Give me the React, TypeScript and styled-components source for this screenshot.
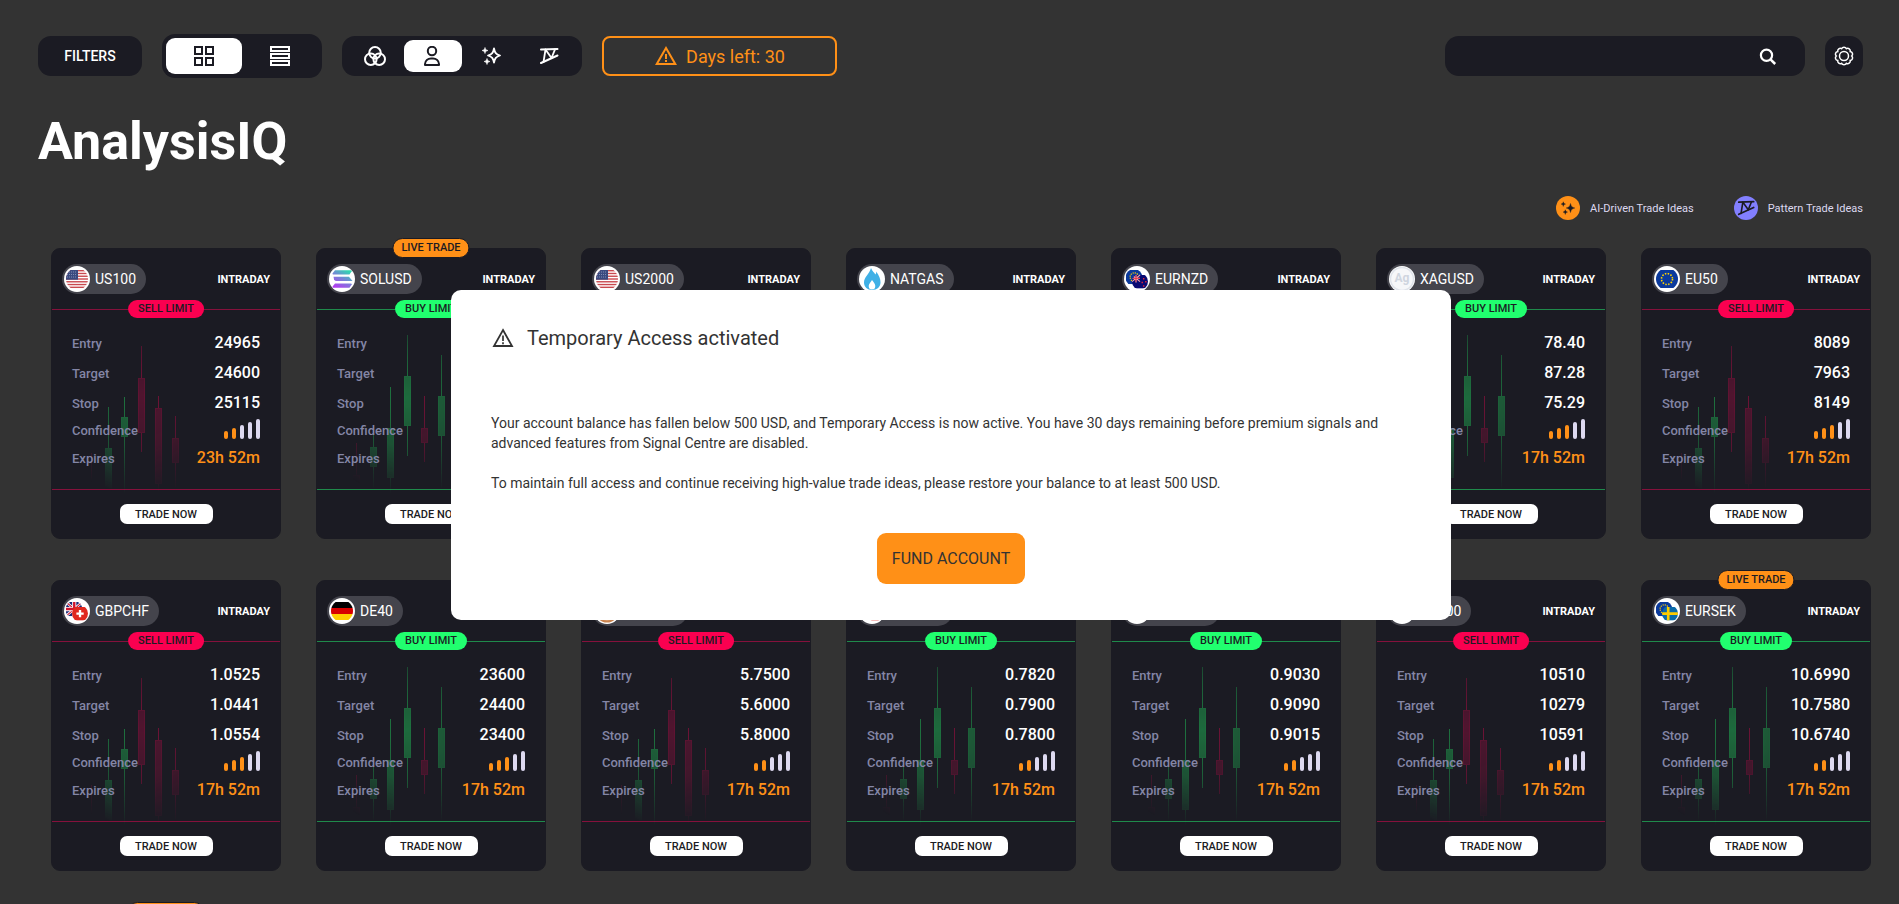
import React from "react";
import styled, { createGlobalStyle, css } from "styled-components";
import { MdWarningAmber } from "react-icons/md";

const color = {
  page: "#333333",
  panel: "#1b1b23",
  orange: "#ff9017",
  green: "#21ff6f",
  red: "#fa0050",
  greenLine: "#1f8a4b",
  redLine: "#85113c",
  label: "#8486a6",
  pill: "#44444c",
  lilac: "#ddd9f0",
  violet: "#827fff",
};

const GlobalStyle = createGlobalStyle`
  *, *::before, *::after { box-sizing: border-box; }
  body {
    margin: 0;
    overflow: hidden;
    background: ${color.page};
    color: #fff;
    font-family: Roboto, "Liberation Sans", sans-serif;
    font-size: 14px;
  }
  button, input { font: inherit; color: inherit; border: 0; padding: 0; }
  button { cursor: pointer; }
`;

/* ---------- page shell ---------- */

const Page = styled.div`
  height: 100vh;
  overflow: hidden;
`;

const TopBar = styled.header`
  display: flex;
  align-items: center;
  gap: 20px;
  min-height: 44px;
  padding: 0 36px 0 38px;
  margin-top: 34px;
`;

const FilterButton = styled.button`
  width: 104px;
  height: 40px;
  border-radius: 13px;
  background: ${color.panel};
  font-weight: 500;
`;

const ToggleGroup = styled.div<{ $large?: boolean }>`
  display: flex;
  align-items: center;
  border-radius: 13px;
  background: ${color.panel};
  padding: 4px;
  ${(p) =>
    p.$large
      ? css`
          height: 44px;
          width: 160px;
        `
      : css`
          height: 40px;
          width: 240px;
        `}
`;

const Toggle = styled.button<{ $active?: boolean }>`
  flex: 1;
  height: 100%;
  display: grid;
  place-items: center;
  border-radius: 9px;
  color: ${(p) => (p.$active ? color.panel : "#fff")};
  background: ${(p) => (p.$active ? "#fff" : "transparent")};
`;

const DaysLeft = styled.button`
  display: flex;
  align-items: center;
  justify-content: center;
  gap: 8px;
  width: 235px;
  height: 40px;
  border: 2px solid ${color.orange};
  border-radius: 8px;
  background: transparent;
  color: ${color.orange};
  font-size: 18px;
`;

const SearchBox = styled.form`
  display: flex;
  align-items: center;
  width: 360px;
  height: 40px;
  margin-left: auto;
  padding: 0 28px 0 20px;
  border-radius: 14px;
  background: ${color.panel};
`;

const SearchInput = styled.input`
  flex: 1;
  min-width: 0;
  background: transparent;
  outline: none;
`;

const IconButton = styled.button`
  display: grid;
  place-items: center;
  background: transparent;
`;

const SettingsButton = styled(IconButton)`
  width: 38px;
  height: 40px;
  border-radius: 13px;
  background: ${color.panel};
`;

const Title = styled.h1`
  margin: 34px 38px 0;
  font-size: 52px;
  line-height: 60px;
  font-weight: 700;
`;

const Legend = styled.ul`
  display: flex;
  justify-content: flex-end;
  gap: 40px;
  margin: 24px 36px 28px;
  padding: 0;
  list-style: none;
`;

const LegendItem = styled.li`
  display: flex;
  align-items: center;
  gap: 10px;
  height: 24px;
  color: #ddd9f0;
  font-size: 11px;
`;

const LegendDot = styled.span<{ $tone: string }>`
  display: grid;
  place-items: center;
  width: 24px;
  height: 24px;
  border-radius: 50%;
  color: ${color.panel};
  background: ${(p) => p.$tone};
`;

/* ---------- trade cards ---------- */

const CardGrid = styled.main`
  display: grid;
  grid-template-columns: repeat(auto-fill, minmax(228px, 1fr));
  gap: 41px 35px;
  padding: 0 28px 41px 51px;
`;

const Card = styled.article`
  position: relative;
  border: 1px solid ${color.panel};
  border-radius: 9px;
  background: ${color.panel};
`;

const LiveBadge = styled.span`
  position: absolute;
  top: -11px;
  left: 50%;
  transform: translateX(-50%);
  height: 20px;
  padding: 0 8px;
  border: 1px solid ${color.panel};
  border-radius: 10px;
  background: ${color.orange};
  color: ${color.panel};
  font-size: 11px;
  font-weight: 500;
  line-height: 18px;
  white-space: nowrap;
`;

const CardHead = styled.div`
  display: flex;
  align-items: center;
  justify-content: space-between;
  height: 60px;
  padding: 0 10px;
`;

const SymbolPill = styled.div`
  display: flex;
  align-items: center;
  gap: 5px;
  height: 30px;
  padding: 0 10px 0 2px;
  border-radius: 15px;
  background: ${color.pill};
  font-size: 14px;
`;

const Term = styled.span`
  font-size: 11px;
  font-weight: 700;
`;

const CardBody = styled.div<{ $buy: boolean }>`
  position: relative;
  height: 181px;
  padding: 18px 20px 0;
  border: solid ${(p) => (p.$buy ? color.greenLine : color.redLine)};
  border-width: 1px 0;
`;

const SideBadge = styled.span<{ $buy: boolean }>`
  position: absolute;
  top: -10px;
  left: 50%;
  transform: translateX(-50%);
  padding: 0 10px;
  border-radius: 9px;
  background: ${(p) => (p.$buy ? color.green : color.red)};
  color: ${color.panel};
  font-size: 11px;
  font-weight: 500;
  line-height: 18px;
  white-space: nowrap;
`;

const Candles = styled.svg`
  position: absolute;
  left: 30px;
  top: 20px;
`;

const Levels = styled.dl`
  position: relative;
  margin: 0;
`;

const Level = styled.div<{ $h: number }>`
  display: flex;
  align-items: baseline;
  justify-content: space-between;
  height: ${(p) => p.$h}px;
  line-height: ${(p) => p.$h}px;
`;

const LevelName = styled.dt`
  color: ${color.label};
  font-size: 13px;
  font-weight: 500;
`;

const LevelValue = styled.dd<{ $accent?: boolean }>`
  margin: 0;
  color: ${(p) => (p.$accent ? color.orange : "#fff")};
  font-size: 16px;
  font-weight: 500;
`;

const Meter = styled.dd`
  display: flex;
  align-items: flex-end;
  align-self: flex-start;
  gap: 4px;
  height: 20px;
  margin: 1px 0 0;
`;

const MeterBar = styled.span<{ $on: boolean; $h: number }>`
  width: 4px;
  height: ${(p) => p.$h}px;
  border-radius: 2px;
  background: ${(p) => (p.$on ? color.orange : color.lilac)};
`;

const CardFoot = styled.div`
  display: grid;
  place-items: center;
  height: 48px;
`;

const TradeButton = styled.button`
  width: 93px;
  height: 20px;
  border-radius: 7px;
  background: #fff;
  color: ${color.panel};
  font-size: 11px;
  font-weight: 500;
`;

/* ---------- dialog ---------- */

const Overlay = styled.div`
  position: fixed;
  inset: 0;
  display: flex;
  align-items: center;
  justify-content: center;
  padding: 6px 0 0 3px;
`;

const Dialog = styled.section`
  width: 1000px;
  max-width: calc(100% - 48px);
  padding: 34px 40px 36px;
  border-radius: 10px;
  background: #fff;
  color: #333;
`;

const DialogTitle = styled.h2`
  display: flex;
  align-items: center;
  gap: 12px;
  margin: 0 0 61px;
  font-size: 20px;
  line-height: 28px;
  font-weight: 400;
`;

const DialogText = styled.p`
  margin: 0 0 20px;
  line-height: 20px;
`;

const FundButton = styled.button`
  display: block;
  height: 51px;
  margin: 40px auto 0;
  padding: 0 15px;
  border-radius: 9px;
  background: ${color.orange};
  color: #333;
  font-size: 16px;
`;

/* ---------- icons ---------- */

const GridIcon = () => (
  <svg width="20" height="20" viewBox="0 0 20 20" fill="none" stroke="currentColor" strokeWidth="2" aria-hidden>
    <rect x="1" y="1" width="7" height="7" />
    <rect x="12" y="1" width="7" height="7" />
    <rect x="1" y="12" width="7" height="7" />
    <rect x="12" y="12" width="7" height="7" />
  </svg>
);

const ListIcon = () => (
  <svg width="20" height="20" viewBox="0 0 20 20" fill="none" stroke="currentColor" strokeWidth="2" aria-hidden>
    <rect x="1" y="1" width="18" height="4" />
    <rect x="1" y="8" width="18" height="4" />
    <rect x="1" y="15" width="18" height="4" />
  </svg>
);

const VennIcon = () => (
  <svg width="22" height="20" viewBox="0 0 22 20" fill="none" stroke="currentColor" strokeWidth="2" aria-hidden>
    <circle cx="11" cy="6.8" r="5.8" />
    <circle cx="6.8" cy="13.2" r="5.8" />
    <circle cx="15.2" cy="13.2" r="5.8" />
  </svg>
);

const PersonIcon = () => (
  <svg width="18" height="20" viewBox="0 0 18 20" fill="none" stroke="currentColor" strokeWidth="2" aria-hidden>
    <circle cx="8" cy="5" r="4.200" />
    <path d="M1 19v-1a6 6 0 0 1 6-5.500h2a6 6 0 0 1 6 5.500v1z" strokeLinejoin="round" />
  </svg>
);

const SparkleIcon = () => (
  <svg width="20" height="20" viewBox="0 0 20 20" fill="currentColor" aria-hidden>
    <path
      d="M13 2.500c.8 4.300 1.900 5.700 6 7-4.100 1.300-5.200 2.700-6 7-.8-4.300-1.900-5.700-6-7 4.100-1.300 5.200-2.700 6-7z"
      fill="none"
      stroke="currentColor"
      strokeWidth="1.800"
      strokeLinejoin="round"
    />
    <path d="M4 1.500c.4 2 1 2.600 3 3-2 .4-2.600 1-3 3-.4-2-1-2.600-3-3 2-.4 2.600-1 3-3z" stroke="currentColor" strokeWidth=".6" />
    <path d="M6 12.500c.5 2 1 2.600 3 3-2 .4-2.500 1-3 3-.5-2-1-2.600-3-3 2-.4 2.500-1 3-3z" stroke="currentColor" strokeWidth=".6" />
  </svg>
);

const PatternIcon = ({ size = 20 }: { size?: number }) => (
  <svg width={size} height={size} viewBox="0 0 20 20" fill="none" stroke="currentColor" strokeWidth="2" strokeLinecap="round" strokeLinejoin="round" aria-hidden>
    <path d="M2 3.500 18.500 3M2 17 18.500 9.500" />
    <path d="M4.500 16 6.500 3.500 12.500 12 16 3.300" strokeWidth="1.800" />
  </svg>
);

const SearchIcon = () => (
  <svg width="18" height="18" viewBox="0 0 18 18" fill="none" stroke="currentColor" strokeWidth="2.200" aria-hidden>
    <circle cx="7.500" cy="8.300" r="5.600" />
    <path d="m11.500 12.300 4.700 4.700" strokeWidth="2.500" />
  </svg>
);

const StarsIcon = () => (
  <svg width="16" height="16" viewBox="0 0 16 16" fill="currentColor" aria-hidden>
    <path d="M10.500 3.500c.7 3 1.600 4 4.300 4.500-2.700.6-3.600 1.500-4.300 4.500-.7-3-1.600-3.900-4.300-4.500 2.700-.5 3.600-1.500 4.300-4.500z" stroke="currentColor" strokeWidth=".4" />
    <path d="M3.300 1.800c.4 1.500.9 2 2.200 2.300-1.300.4-1.800.8-2.200 2.300-.4-1.500-.9-1.900-2.200-2.300 1.300-.3 1.800-.8 2.200-2.300z" stroke="currentColor" strokeWidth=".4" />
    <path d="M5.300 9.800c.4 1.500.9 2 2.200 2.300-1.300.4-1.800.8-2.200 2.300-.4-1.500-.9-1.900-2.200-2.300 1.300-.3 1.800-.8 2.200-2.300z" stroke="currentColor" strokeWidth=".4" />
  </svg>
);

const cogPath = (() => {
  const lobes = 10;
  const point = (i: number) => {
    const a = ((i - 0.5) * 2 * Math.PI) / lobes - Math.PI / 2;
    return `${(10 + 7.7 * Math.cos(a)).toFixed(2)} ${(10 + 7.7 * Math.sin(a)).toFixed(2)}`;
  };
  let d = `M${point(0)}`;
  for (let i = 1; i <= lobes; i++) d += `A2.6 2.6 0 0 1 ${point(i)}`;
  return d + "Z";
})();

const CogIcon = () => (
  <svg width="20" height="20" viewBox="0 0 20 20" fill="none" stroke="currentColor" strokeWidth="1.500" aria-hidden>
    <path d={cogPath} />
    <circle cx="10" cy="10" r="4.500" />
  </svg>
);

const WarningIcon = () => (
  <svg width="24" height="24" viewBox="0 0 24 24" fill="none" stroke="currentColor" strokeWidth="1.800" aria-hidden>
    <path d="M12 4 21 20H3z" />
    <path d="M12 9.500v5.500M12 16.300v2" strokeWidth="1.700" />
  </svg>
);

/* ---------- market symbols ---------- */

type FlagCode = "us" | "de" | "eu" | "gb" | "ch" | "se" | "nz" | "au" | "ca" | "sol" | "gas" | "ag" | "cu";

const FlagArt = ({ code }: { code: FlagCode }) => {
  switch (code) {
    case "us":
      return (
        <g>
          <rect width="22" height="18" fill="#fff" />
          {[0, 1, 2, 3, 4, 5, 6].map((i) => (
            <rect key={i} y={i * 2.77} width="22" height="1.400" fill="#c9494f" />
          ))}
          <rect width="12" height="9.700" fill="#3a4a80" />
          <path d="M1 2h10M1 4.500h10M1 7h10" stroke="#a9b1cf" strokeWidth=".8" strokeDasharray=".8 1.200" />
        </g>
      );
    case "de":
      return (
        <g>
          <rect width="22" height="6" fill="#000" />
          <rect y="6" width="22" height="6" fill="#d80000" />
          <rect y="12" width="22" height="6" fill="#ffce00" />
        </g>
      );
    case "eu":
      return (
        <g>
          <rect width="22" height="18" fill="#0b3a9c" />
          <circle cx="11" cy="9" r="5.500" fill="none" stroke="#ffd500" strokeWidth="1.600" strokeDasharray="1.500 1.380" />
        </g>
      );
    case "gb":
      return (
        <g>
          <rect width="22" height="18" fill="#1b2a78" />
          <path d="M0 0 22 18M22 0 0 18" stroke="#fff" strokeWidth="3.500" />
          <path d="M0 0 22 18M22 0 0 18" stroke="#d0142c" strokeWidth="1.300" />
          <path d="M11 0v18M0 9h22" stroke="#fff" strokeWidth="5.500" />
          <path d="M11 0v18M0 9h22" stroke="#d0142c" strokeWidth="3.200" />
        </g>
      );
    case "ch":
      return (
        <g>
          <rect width="22" height="18" fill="#e0281f" />
          <path d="M11 4v10M6 9h10" stroke="#fff" strokeWidth="3.200" />
        </g>
      );
    case "se":
      return (
        <g>
          <rect width="22" height="18" fill="#0a6aa8" />
          <path d="M8.500 0v18M0 9h22" stroke="#fecb00" strokeWidth="3.600" />
        </g>
      );
    case "nz":
    case "au":
      return (
        <g>
          <rect width="22" height="18" fill="#0a0a72" />
          <path d="M0 0 11 9M11 0 0 9M5.500 0v10M0 4.500h11" stroke="#f7a5ac" strokeWidth="1.600" />
          <path d="M5.500 0v9M0 4.500h11" stroke="#e0283c" strokeWidth="1.200" />
          <path d="M16 4v2M19 8v2M14 9v2M16 14v2" stroke="#e0283c" strokeWidth="2" />
        </g>
      );
    case "ca":
      return (
        <g>
          <rect width="22" height="18" fill="#fff" />
          <rect width="5.500" height="18" fill="#e0281f" />
          <rect x="16.500" width="5.500" height="18" fill="#e0281f" />
          <path d="M11 4l4 5-4 5-4-5z" fill="#e0281f" />
        </g>
      );
    default:
      return null;
  }
};

const Flag = ({ codes, id }: { codes: FlagCode[]; id: string }) => {
  const [first, second] = codes;
  return (
    <svg width="26" height="26" viewBox="0 0 26 26" aria-hidden>
      <defs>
        <clipPath id={`${id}-full`}>
          <circle cx="13" cy="13" r="11" />
        </clipPath>
        <clipPath id={`${id}-a`}>
          <circle cx="10" cy="11.500" r="8.500" />
        </clipPath>
        <clipPath id={`${id}-b`}>
          <circle cx="16" cy="15.500" r="8" />
        </clipPath>
        <linearGradient id={`${id}-sol`} gradientUnits="userSpaceOnUse" x1="18" y1="4" x2="8" y2="22">
          <stop offset="0" stopColor="#2fd9b0" />
          <stop offset=".5" stopColor="#7a7fd8" />
          <stop offset="1" stopColor="#b23cf0" />
        </linearGradient>
      </defs>
      <circle cx="13" cy="13" r="13" fill="#fff" />
      {second && (
        <>
          <g clipPath={`url(#${id}-a)`}>
            <g transform="translate(2 4) scale(.75 .78)">
              <FlagArt code={first} />
            </g>
          </g>
          <g clipPath={`url(#${id}-b)`}>
            <g transform="translate(8 9) scale(.73 .74)">
              <FlagArt code={second} />
            </g>
          </g>
        </>
      )}
      {!second && first === "sol" && (
        <g fill={`url(#${id}-sol)`}>
          <path d="M6 4.300h15.500q2.500 0 .5 2l-1.500 2.200H5q-2.500 0-1-1.800z" />
          <path d="M4.500 10.800H20l3.500 4.200H7.500q-1.500 0-2.500-1.500z" />
          <path d="M6 17.500h15.500q2.500 0 .5 2L20.500 21.700H5q-2.500 0-1-1.800z" />
        </g>
      )}
      {!second && first === "gas" && (
        <g>
          <path d="M12 2c1 3 3.500 4.500 4.300 6.500.9-.8 1-1.800.9-3 3 4 4.300 7.500 4.300 11 0 4.500-3.500 7.500-8.300 7.500S5 21 5 16.500C5 11 10.500 8 12 2z" fill="#3fb0e6" />
          <path d="M13 14c1.500 2.300 3.300 3.800 3.300 6a3.300 3.600 0 0 1-6.600 0c0-2.200 2.200-3.700 3.300-6z" fill="#fff" />
        </g>
      )}
      {!second && first === "ag" && (
        <g>
          <circle cx="13" cy="13" r="11.500" fill="#f6f7f9" stroke="#dfe3ea" strokeWidth="1.500" />
          <text x="13" y="16" textAnchor="middle" fontSize="12" fontWeight="700" fill="#cfd5df">
            Ag
          </text>
        </g>
      )}
      {!second && first === "cu" && <circle cx="13" cy="13" r="10.500" fill="#e6b48c" stroke="#c9834f" strokeWidth="2" />}
      {!second && !["sol", "gas", "ag", "cu"].includes(first) && (
        <g clipPath={`url(#${id}-full)`}>
          <g transform="translate(2 4)">
            <FlagArt code={first} />
          </g>
        </g>
      )}
    </svg>
  );
};

/* Candle: centre x, wick top, wick bottom, body top, body bottom, rising */
type Candle = [number, number, number, number, number, boolean];

const sellCandles: Candle[] = [
  [9, 123, 166, 155, 166, false],
  [26, 77, 118, 118, 166, true],
  [42, 67, 164, 87, 107, true],
  [59, 16, 122, 48, 103, false],
  [76, 66, 161, 78, 154, false],
  [93, 86, 161, 108, 133, false],
];

const buyCandles: Candle[] = [
  [9, 113, 164, 145, 164, false],
  [26, 105, 164, 117, 137, true],
  [43, 57, 166, 98, 148, true],
  [60, 5, 126, 46, 96, true],
  [77, 66, 132, 98, 113, false],
  [94, 25, 158, 66, 106, true],
];

const CandleChart = ({ buy, id }: { buy: boolean; id: string }) => (
  <Candles width="104" height="166" viewBox="0 0 104 166" aria-hidden>
    <defs>
      <radialGradient id={`${id}-fade`} gradientUnits="userSpaceOnUse" cx="60" cy="68" r="98">
        <stop offset="0" stopColor="#fff" stopOpacity=".5" />
        <stop offset=".5" stopColor="#fff" stopOpacity=".34" />
        <stop offset="1" stopColor="#fff" stopOpacity="0" />
      </radialGradient>
      <mask id={`${id}-mask`} maskUnits="userSpaceOnUse" x="0" y="0" width="104" height="166">
        <rect width="104" height="166" fill={`url(#${id}-fade)`} />
      </mask>
    </defs>
    <g mask={`url(#${id}-mask)`}>
      {(buy ? buyCandles : sellCandles).map(([x, top, bottom, bodyTop, bodyBottom, up]) => {
        const tone = up ? "#22d860" : "#d0094c";
        return (
          <g key={x}>
            <rect x={x} y={top} width="1" height={bodyTop - top} fill={tone} />
            <rect x={x} y={bodyBottom} width="1" height={Math.max(bottom - bodyBottom, 0)} fill={tone} />
            <rect x={x - 3} y={bodyTop} width="7" height={bodyBottom - bodyTop} fill={tone} fillOpacity={up ? 0.85 : 0.6} />
            <rect x={x - 2.5} y={bodyTop + 0.5} width="6" height={bodyBottom - bodyTop - 1} fill="none" stroke={tone} strokeOpacity=".5" />
          </g>
        );
      })}
    </g>
  </Candles>
);

/* ---------- data ---------- */

interface Trade {
  symbol: string;
  flags: FlagCode[];
  buy: boolean;
  live?: boolean;
  entry: string;
  target: string;
  stop: string;
  confidence: number;
  expires: string;
}

const trades: Trade[] = [
  { symbol: "US100", flags: ["us"], buy: false, entry: "24965", target: "24600", stop: "25115", confidence: 2, expires: "23h 52m" },
  { symbol: "SOLUSD", flags: ["sol"], buy: true, live: true, entry: "84.20", target: "92.50", stop: "80.10", confidence: 3, expires: "17h 52m" },
  { symbol: "US2000", flags: ["us"], buy: true, entry: "2610", target: "2668", stop: "2588", confidence: 3, expires: "17h 52m" },
  { symbol: "NATGAS", flags: ["gas"], buy: false, entry: "3.120", target: "2.960", stop: "3.200", confidence: 2, expires: "17h 52m" },
  { symbol: "EURNZD", flags: ["eu", "nz"], buy: true, entry: "1.9650", target: "1.9780", stop: "1.9600", confidence: 2, expires: "17h 52m" },
  { symbol: "XAGUSD", flags: ["ag"], buy: true, entry: "78.40", target: "87.28", stop: "75.29", confidence: 3, expires: "17h 52m" },
  { symbol: "EU50", flags: ["eu"], buy: false, entry: "8089", target: "7963", stop: "8149", confidence: 3, expires: "17h 52m" },
  { symbol: "GBPCHF", flags: ["gb", "ch"], buy: false, entry: "1.0525", target: "1.0441", stop: "1.0554", confidence: 3, expires: "17h 52m" },
  { symbol: "DE40", flags: ["de"], buy: true, entry: "23600", target: "24400", stop: "23400", confidence: 3, expires: "17h 52m" },
  { symbol: "COPPER", flags: ["cu"], buy: false, entry: "5.7500", target: "5.6000", stop: "5.8000", confidence: 2, expires: "17h 52m" },
  { symbol: "USDCHF", flags: ["us", "ch"], buy: true, entry: "0.7820", target: "0.7900", stop: "0.7800", confidence: 2, expires: "17h 52m" },
  { symbol: "AUDCAD", flags: ["au", "ca"], buy: true, entry: "0.9030", target: "0.9090", stop: "0.9015", confidence: 2, expires: "17h 52m" },
  { symbol: "UK100", flags: ["gb"], buy: false, entry: "10510", target: "10279", stop: "10591", confidence: 2, expires: "17h 52m" },
  { symbol: "EURSEK", flags: ["eu", "se"], buy: true, live: true, entry: "10.6990", target: "10.7580", stop: "10.6740", confidence: 2, expires: "17h 52m" },
  { symbol: "EURUSD", flags: ["eu", "us"], buy: true, live: true, entry: "1.1810", target: "1.1890", stop: "1.1780", confidence: 3, expires: "17h 52m" },
];

const meterHeights = [8, 11, 14, 17, 20];

const TradeCard = ({ trade }: { trade: Trade }) => {
  const id = trade.symbol.toLowerCase();
  return (
    <Card>
      {trade.live && <LiveBadge>LIVE TRADE</LiveBadge>}
      <CardHead>
        <SymbolPill>
          <Flag codes={trade.flags} id={id} />
          {trade.symbol}
        </SymbolPill>
        <Term>INTRADAY</Term>
      </CardHead>
      <CardBody $buy={trade.buy}>
        <SideBadge $buy={trade.buy}>{trade.buy ? "BUY LIMIT" : "SELL LIMIT"}</SideBadge>
        <CandleChart buy={trade.buy} id={id} />
        <Levels>
          <Level $h={30}>
            <LevelName>Entry</LevelName>
            <LevelValue>{trade.entry}</LevelValue>
          </Level>
          <Level $h={30}>
            <LevelName>Target</LevelName>
            <LevelValue>{trade.target}</LevelValue>
          </Level>
          <Level $h={30}>
            <LevelName>Stop</LevelName>
            <LevelValue>{trade.stop}</LevelValue>
          </Level>
          <Level $h={26}>
            <LevelName>Confidence</LevelName>
            <Meter aria-label={`${trade.confidence} of 5`}>
              {meterHeights.map((h, i) => (
                <MeterBar key={h} $h={h} $on={i < trade.confidence} />
              ))}
            </Meter>
          </Level>
          <Level $h={28}>
            <LevelName>Expires</LevelName>
            <LevelValue $accent>{trade.expires}</LevelValue>
          </Level>
        </Levels>
      </CardBody>
      <CardFoot>
        <TradeButton type="button">TRADE NOW</TradeButton>
      </CardFoot>
    </Card>
  );
};

export default function App() {
  return (
    <>
      <GlobalStyle />
      <Page>
        <TopBar>
          <FilterButton type="button">FILTERS</FilterButton>
          <ToggleGroup $large role="group" aria-label="Layout">
            <Toggle type="button" $active aria-pressed aria-label="Grid view">
              <GridIcon />
            </Toggle>
            <Toggle type="button" aria-label="List view">
              <ListIcon />
            </Toggle>
          </ToggleGroup>
          <ToggleGroup role="group" aria-label="Source">
            <Toggle type="button" aria-label="All ideas">
              <VennIcon />
            </Toggle>
            <Toggle type="button" $active aria-pressed aria-label="Analyst ideas">
              <PersonIcon />
            </Toggle>
            <Toggle type="button" aria-label="AI-driven ideas">
              <SparkleIcon />
            </Toggle>
            <Toggle type="button" aria-label="Pattern ideas">
              <PatternIcon />
            </Toggle>
          </ToggleGroup>
          <DaysLeft type="button">
            <MdWarningAmber size={24} />
            Days left: 30
          </DaysLeft>
          <SearchBox role="search">
            <SearchInput type="text" aria-label="Search" />
            <IconButton type="submit" aria-label="Run search">
              <SearchIcon />
            </IconButton>
          </SearchBox>
          <SettingsButton type="button" aria-label="Settings">
            <CogIcon />
          </SettingsButton>
        </TopBar>

        <Title>AnalysisIQ</Title>

        <Legend>
          <LegendItem>
            <LegendDot $tone={color.orange}>
              <StarsIcon />
            </LegendDot>
            AI-Driven Trade Ideas
          </LegendItem>
          <LegendItem>
            <LegendDot $tone={color.violet}>
              <PatternIcon size={18} />
            </LegendDot>
            Pattern Trade Ideas
          </LegendItem>
        </Legend>

        <CardGrid>
          {trades.map((trade) => (
            <TradeCard key={trade.symbol} trade={trade} />
          ))}
        </CardGrid>
      </Page>

      <Overlay>
        <Dialog role="dialog" aria-modal="true" aria-labelledby="access-title">
          <DialogTitle id="access-title">
            <WarningIcon />
            Temporary Access activated
          </DialogTitle>
          <DialogText>
            Your account balance has fallen below 500 USD, and Temporary Access is now active. You have 30 days remaining
            before premium signals and advanced features from Signal Centre are disabled.
          </DialogText>
          <DialogText>
            To maintain full access and continue receiving high-value trade ideas, please restore your balance to at least
            500 USD.
          </DialogText>
          <FundButton type="button">FUND ACCOUNT</FundButton>
        </Dialog>
      </Overlay>
    </>
  );
}
